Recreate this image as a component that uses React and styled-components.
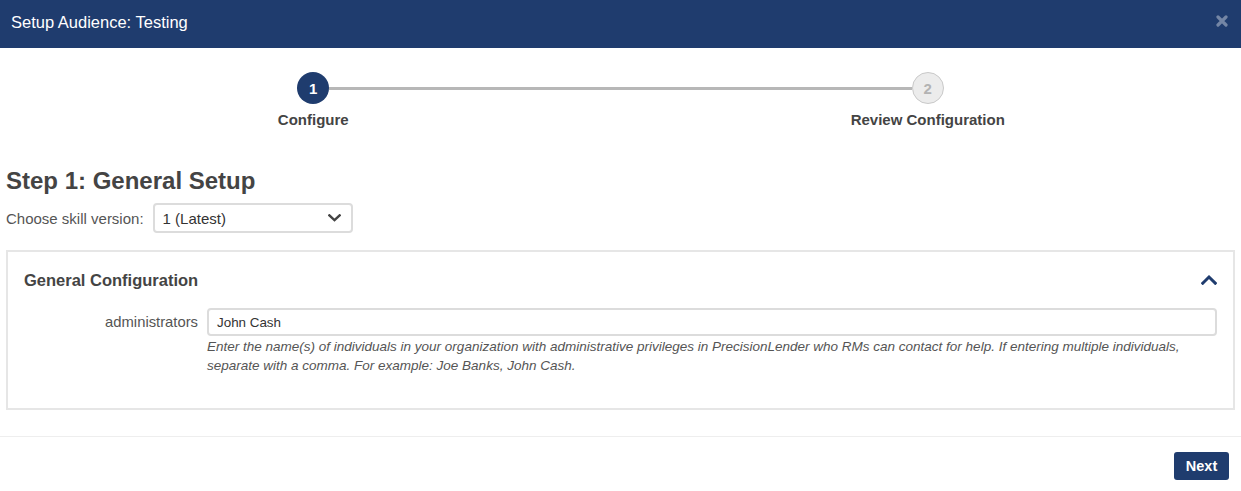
import React from "react";
import styled, { createGlobalStyle } from "styled-components";

const navy = "#1f3c6e";

const GlobalStyle = createGlobalStyle`
  html, body {
    margin: 0;
    padding: 0;
    background: #ffffff;
    font-family: "Liberation Sans", Arial, sans-serif;
    color: #333;
  }
  * { box-sizing: border-box; }
`;

const Modal = styled.div`
  width: 1241px;
  height: 491px;
  background: #fff;
  display: flex;
  flex-direction: column;
`;

const Header = styled.div`
  height: 48px;
  background: ${navy};
  display: flex;
  align-items: flex-start;
  justify-content: space-between;
  padding: 12px 13px 0 11px;
`;

const Title = styled.h4`
  margin: 0;
  font-size: 16.5px;
  line-height: 20px;
  font-weight: 400;
  color: #fff;
`;

const Close = styled.button`
  border: 0;
  background: none;
  padding: 0;
  margin-top: 3px;
  width: 12px;
  height: 12px;
  color: rgba(255, 255, 255, 0.38);
  cursor: pointer;
  display: flex;
`;

const Body = styled.div`
  padding: 0 6px;
  flex: 1;
`;

const Stepper = styled.div`
  display: grid;
  grid-template-columns: 1fr 1fr;
  padding-top: 24px;
`;

const Step = styled.div`
  position: relative;
  display: flex;
  flex-direction: column;
  align-items: center;
  gap: 8px;

  &:first-child::after {
    content: "";
    position: absolute;
    top: 15px;
    left: calc(50% + 16px);
    width: calc(100% - 32px);
    height: 3px;
    background: #b7b7b7;
  }
`;

const Circle = styled.div`
  width: 32px;
  height: 32px;
  border-radius: 50%;
  display: flex;
  align-items: center;
  justify-content: center;
  font-size: 15px;
  font-weight: 700;
  background: ${({ $active }) => ($active ? navy : "#ececec")};
  color: ${({ $active }) => ($active ? "#fff" : "#b3b3b3")};
  border: ${({ $active }) => ($active ? "none" : "1px solid #c9c9c9")};
`;

const StepLabel = styled.div`
  font-size: 15px;
  font-weight: 700;
  line-height: 16px;
  color: #444;
`;

const StepTitle = styled.h3`
  margin: 39px 0 0;
  font-size: 24px;
  line-height: 28px;
  font-weight: 700;
  color: #444;
`;

const VersionRow = styled.div`
  display: flex;
  align-items: center;
  gap: 9px;
  margin-top: 8px;
`;

const FieldLabel = styled.label`
  font-size: 15px;
  color: #555;
`;

const Select = styled.div`
  width: 200px;
  height: 30px;
  border: 2px solid #dcdcdc;
  border-radius: 4px;
  display: flex;
  align-items: center;
  justify-content: space-between;
  padding: 0 10px 0 8px;
  font-size: 15px;
  color: #333;
`;

const Panel = styled.div`
  margin-top: 17px;
  border: 2px solid #e6e6e6;
  padding: 17px 16px 33px;
`;

const PanelHead = styled.div`
  display: flex;
  align-items: center;
  justify-content: space-between;
`;

const PanelTitle = styled.div`
  font-size: 16.5px;
  line-height: 22px;
  font-weight: 700;
  color: #444;
`;

const FormRow = styled.div`
  display: grid;
  grid-template-columns: 174px 1fr;
  column-gap: 9px;
  margin-top: 17px;
`;

const RowLabel = styled.label`
  text-align: right;
  font-size: 14.8px;
  color: #555;
  line-height: 28px;
`;

const Input = styled.div`
  height: 28px;
  border: 2px solid #dcdcdc;
  border-radius: 4px;
  padding: 0 8px;
  display: flex;
  align-items: center;
  font-size: 13.4px;
  color: #333;
`;

const Help = styled.p`
  margin: 0;
  font-size: 13.5px;
  line-height: 19px;
  font-style: italic;
  color: #555;
  padding-top: 1px;
`;

const Footer = styled.div`
  border-top: 1px solid #eeeeee;
  display: flex;
  justify-content: flex-end;
  padding: 15px 12px 11px;
`;

const NextButton = styled.button`
  width: 55px;
  height: 28px;
  border: 0;
  border-radius: 3px;
  background: ${navy};
  color: #fff;
  font-family: inherit;
  font-size: 14.5px;
  font-weight: 700;
  cursor: pointer;
`;

const Chevron = ({ up, color, size = 14 }) => (
  <svg width={size} height={size * 0.6} viewBox="0 0 14 8.4" fill="none">
    <path
      d={up ? "M1.5 7.2 L7 1.8 L12.5 7.2" : "M1.5 1.5 L7 6.6 L12.5 1.5"}
      stroke={color}
      strokeWidth="2.6"
      strokeLinecap="square"
    />
  </svg>
);

export default function App() {
  return (
    <Modal>
      <GlobalStyle />
      <Header>
        <Title>Setup Audience: Testing</Title>
        <Close aria-label="close">
          <svg width="12" height="12" viewBox="0 0 12 12">
            <path d="M2 2 L10 10 M10 2 L2 10" stroke="currentColor" strokeWidth="3.2" strokeLinecap="round" />
          </svg>
        </Close>
      </Header>
      <Body>
        <Stepper>
          <Step>
            <Circle $active>1</Circle>
            <StepLabel>Configure</StepLabel>
          </Step>
          <Step>
            <Circle>2</Circle>
            <StepLabel>Review Configuration</StepLabel>
          </Step>
        </Stepper>

        <StepTitle>Step 1: General Setup</StepTitle>
        <VersionRow>
          <FieldLabel>Choose skill version:</FieldLabel>
          <Select>
            <span>1 (Latest)</span>
            <Chevron color="#444" size={13} />
          </Select>
        </VersionRow>

        <Panel>
          <PanelHead>
            <PanelTitle>General Configuration</PanelTitle>
            <Chevron up color={navy} size={16} />
          </PanelHead>
          <FormRow>
            <RowLabel>administrators</RowLabel>
            <Input>John Cash</Input>
            <span />
            <Help>
              Enter the name(s) of individuals in your organization with administrative privileges in PrecisionLender who RMs can contact for help. If entering multiple individuals, separate with a comma. For example: Joe Banks, John Cash.
            </Help>
          </FormRow>
        </Panel>
      </Body>
      <Footer>
        <NextButton>Next</NextButton>
      </Footer>
    </Modal>
  );
}
